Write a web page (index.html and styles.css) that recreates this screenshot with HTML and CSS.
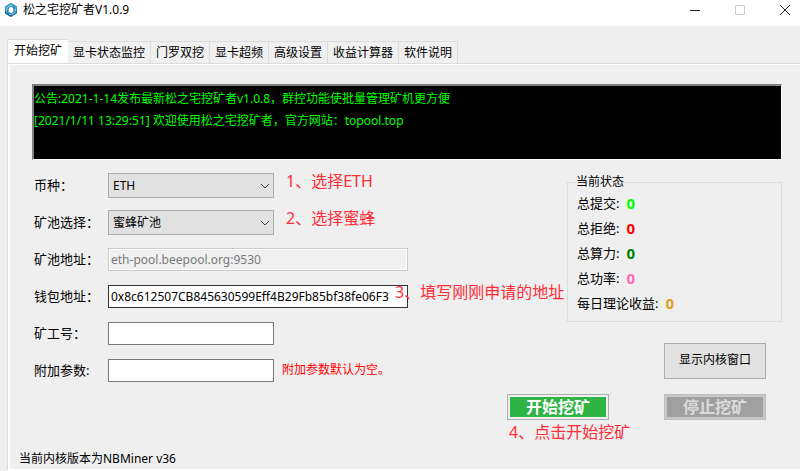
FILE: index.html
```html
<!DOCTYPE html>
<html lang="zh-CN">
<head>
    <meta charset="UTF-8">
    <meta name="viewport" content="width=device-width, initial-scale=1.0">
    <title>松之宅挖矿者V1.0.9</title>
    <link rel="stylesheet" href="styles.css">
</head>
<body>
    <header class="titlebar">
        <svg class="logo" viewBox="0 0 14 16" aria-hidden="true">
            <path d="M7 1 L13 4.5 L13 11.5 L7 15 L1 11.5 L1 4.5 Z" fill="#2a86b8"/>
            <path d="M7 1 L13 4.5 L13 8 C11 4 6.5 3 3.5 5.5 L1 8 L1 4.5 Z" fill="#3aa3cc"/>
            <path d="M1 8 C1.5 12 6 14 10 12 L7 15 L1 11.5 Z" fill="#1a6796"/>
            <path d="M2.6 9.5 C2.2 6 4.5 3.2 8.5 3.6" fill="none" stroke="#b5deee" stroke-width="0.8"/>
            <path d="M11.4 6.5 C11.8 10 9.5 12.8 5.5 12.4" fill="none" stroke="#b5deee" stroke-width="0.8"/>
            <path d="M7 5 C9 5 9.8 6.6 9.4 8.4 C9 10.2 8 11 7 11 C5 11 4.2 9.4 4.6 7.6 C5 5.8 6 5 7 5 Z" fill="#fff"/>
        </svg>
        <h1>松之宅挖矿者V1.0.9</h1>
        <div class="window-buttons">
            <button type="button" aria-label="最小化"><svg viewBox="0 0 12 12"><path d="M1 6.5 H11"/></svg></button>
            <button type="button" aria-label="最大化" disabled><svg viewBox="0 0 12 12"><path d="M1.5 1.5 H10.5 V10.5 H1.5 Z"/></svg></button>
            <button type="button" aria-label="关闭"><svg viewBox="0 0 12 12"><path d="M1 1 L11 11 M11 1 L1 11"/></svg></button>
        </div>
    </header>

    <main class="window">
        <nav class="tabs" role="tablist">
            <button type="button" role="tab" class="tab active" aria-selected="true">开始挖矿</button>
            <button type="button" role="tab" class="tab">显卡状态监控</button>
            <button type="button" role="tab" class="tab">门罗双挖</button>
            <button type="button" role="tab" class="tab">显卡超频</button>
            <button type="button" role="tab" class="tab">高级设置</button>
            <button type="button" role="tab" class="tab">收益计算器</button>
            <button type="button" role="tab" class="tab">软件说明</button>
        </nav>

        <section class="panel">
            <div class="console">
                <p>公告:2021-1-14发布最新松之宅挖矿者v1.0.8，群控功能使批量管理矿机更方便</p>
                <p>[2021/1/11 13:29:51] 欢迎使用松之宅挖矿者，官方网站：topool.top</p>
            </div>

            <div class="columns">
                <form class="settings">
                    <div class="row">
                        <label for="coin">币种：</label>
                        <div class="select">
                            <select id="coin"><option>ETH</option></select>
                            <svg viewBox="0 0 10 6" aria-hidden="true"><path d="M1 1 L5 5 L9 1"/></svg>
                        </div>
                        <span class="note">1、选择ETH</span>
                    </div>
                    <div class="row">
                        <label for="pool">矿池选择：</label>
                        <div class="select">
                            <select id="pool"><option>蜜蜂矿池</option></select>
                            <svg viewBox="0 0 10 6" aria-hidden="true"><path d="M1 1 L5 5 L9 1"/></svg>
                        </div>
                        <span class="note">2、选择蜜蜂</span>
                    </div>
                    <div class="row">
                        <label for="poolUrl">矿池地址：</label>
                        <input type="text" id="poolUrl" class="wide" value="eth-pool.beepool.org:9530" disabled>
                    </div>
                    <div class="row">
                        <label for="wallet">钱包地址：</label>
                        <input type="text" id="wallet" class="wide focused" value="0x8c612507CB845630599Eff4B29Fb85bf38fe06F3">
                        <span class="note note-over">3、填写刚刚申请的地址</span>
                    </div>
                    <div class="row">
                        <label for="worker">矿工号：</label>
                        <input type="text" id="worker">
                    </div>
                    <div class="row">
                        <label for="extra">附加参数:</label>
                        <input type="text" id="extra">
                        <span class="hint">附加参数默认为空。</span>
                    </div>
                </form>

                <div class="side">
                    <fieldset class="status">
                        <legend>当前状态</legend>
                        <dl>
                            <div><dt>总提交:</dt><dd class="submitted">0</dd></div>
                            <div><dt>总拒绝:</dt><dd class="rejected">0</dd></div>
                            <div><dt>总算力:</dt><dd class="hashrate">0</dd></div>
                            <div><dt>总功率:</dt><dd class="power">0</dd></div>
                            <div><dt>每日理论收益:</dt><dd class="income">0</dd></div>
                        </dl>
                    </fieldset>
                    <button type="button" class="show-core">显示内核窗口</button>
                </div>
            </div>

            <div class="actions">
                <button type="button" class="start">开始挖矿</button>
                <button type="button" class="stop" disabled>停止挖矿</button>
                <span class="note">4、点击开始挖矿</span>
            </div>

            <footer class="version">当前内核版本为NBMiner v36</footer>
        </section>
    </main>
</body>
</html>
```

FILE: styles.css
```css
* {
    box-sizing: border-box;
}
body {
    margin: 0;
    min-height: 100vh;
    display: flex;
    flex-direction: column;
    background: #efefef;
    color: #000;
    font-family: "Noto Sans", "Noto Sans CJK SC", sans-serif;
    font-size: 12px;
    line-height: 20px;
}
button, input, select {
    font: inherit;
    color: inherit;
    border-radius: 0;
}

/* title bar */
.titlebar {
    display: flex;
    align-items: center;
    height: 26px;
    padding: 0 9px 6px 4px;
    background: #fff;
}
.logo {
    width: 14px;
    height: 16px;
    margin-right: 5px;
}
h1 {
    margin: 0;
    font-size: 12px;
    font-weight: normal;
}
.window-buttons {
    display: flex;
    gap: 33px;
    margin-left: auto;
}
.window-buttons button {
    display: flex;
    padding: 0;
    border: none;
    background: none;
}
.window-buttons svg {
    width: 12px;
    height: 12px;
    fill: none;
    stroke: #222;
    stroke-width: 1;
}
.window-buttons button:disabled svg {
    stroke: #ccc;
}

/* tabs */
.window {
    flex: 1;
    display: flex;
    flex-direction: column;
    padding: 13px 0 0 7px;
}
.tabs {
    display: flex;
    align-items: flex-end;
}
.tab {
    height: 22px;
    padding: 0 5px;
    border: 1px solid #dcdcdc;
    border-left: none;
    border-bottom: none;
    background: #f0f0f0;
    line-height: 20px;
    white-space: nowrap;
}
.tab.active {
    height: 24px;
    padding: 0 6px 2px;
    border-left: 1px solid #dcdcdc;
    border-right: none;
    background: #fff;
}
.panel {
    flex: 1;
    display: flex;
    flex-direction: column;
    padding: 20px 18px 0 21px;
    border-left: 1px solid #dcdcdc;
    border-top: 1px solid #dcdcdc;
    border-bottom: 2px solid #fff;
    box-shadow: inset 2px 1px #fff;
}

/* log output */
.console {
    height: 76px;
    margin-left: 3px;
    padding: 3px 0;
    border: solid;
    border-width: 2px 1px 1px 2px;
    border-color: #808080 #fff #fff #808080;
    background: #000;
    color: #00ff00;
}
.console p {
    margin: 0 0 2px;
}

/* form */
.columns {
    display: flex;
    gap: 10px;
    padding: 7px 0 0 5px;
}
.settings {
    flex: 1;
}
.row {
    position: relative;
    display: flex;
    align-items: center;
    height: 37px;
}
.row label {
    width: 74px;
    padding-bottom: 2px;
    font-size: 13px;
    white-space: nowrap;
}
.row input {
    width: 166px;
    height: 23px;
    padding: 0 2px;
    border: 1px solid #7a7a7a;
    background: #fff;
}
.row input.wide {
    width: 300px;
}
.row input.focused {
    border-color: #333;
}
.row input:disabled {
    border-color: #ccc;
    background: #f0f0f0;
    box-shadow: inset 0 0 0 1px #fff;
    color: #7a7a7a;
}
.select {
    display: grid;
    align-items: center;
    width: 166px;
}
.select select, .select svg {
    grid-area: 1 / 1;
}
.select select {
    height: 25px;
    padding: 0 4px;
    border: 1px solid #adadad;
    background: #e1e1e1;
    appearance: none;
}
.select svg {
    width: 10px;
    height: 6px;
    margin-right: 4px;
    justify-self: end;
    fill: none;
    stroke: #444;
    pointer-events: none;
}
.note {
    color: #ff2d37;
    font-size: 16px;
    line-height: 24px;
    white-space: nowrap;
}
.row .note {
    margin: 0 0 10px 12px;
}
.row .note-over {
    position: absolute;
    left: 361px;
    margin: 0 0 10px;
}
.hint {
    margin-left: 8px;
    padding-bottom: 2px;
    color: #ff0000;
}

/* status */
.side {
    width: 215px;
    padding-top: 6px;
    display: flex;
    flex-direction: column;
}
.status {
    margin: 0;
    padding: 0 8px 6px;
    border: 1px solid #dcdcdc;
}
.status legend {
    padding: 0;
    line-height: 18px;
}
.status dl {
    margin: -1px 0 0;
    font-size: 13px;
}
.status dl div {
    display: flex;
    align-items: center;
    gap: 7px;
    height: 25px;
    padding-left: 1px;
}
.status dd {
    margin: 0;
    font-size: 15px;
    font-weight: bold;
}
.submitted {
    color: #00ff00;
}
.rejected {
    color: #ff0000;
}
.hashrate {
    color: #008000;
}
.power {
    color: #ff69b4;
}
.income {
    color: #daa520;
}
.show-core {
    align-self: flex-end;
    width: 102px;
    height: 36px;
    margin: 21px 16px 0 0;
    padding: 0 0 2px;
    border: 1px solid #adadad;
    background: #e1e1e1;
}

/* start / stop */
.actions {
    display: grid;
    grid-template-columns: 102px 102px;
    column-gap: 55px;
    justify-content: end;
    margin-right: 16px;
    padding-top: 5px;
}
.actions button {
    height: 26px;
    padding: 0;
    border: 1px solid #adadad;
    font-size: 16px;
    font-weight: bold;
    line-height: 22px;
    color: #fff;
}
.actions .start {
    background: #2fb344;
    box-shadow: inset 0 0 0 2px #f0f0f0;
}
.actions .stop {
    border-color: #bfbfbf;
    background: #a0a0a0;
    box-shadow: inset 0 0 0 2px #c8c8c8;
    color: #dcdcdc;
}
.actions .note {
    grid-column: 1 / -1;
    margin-left: 2px;
}
.version {
    margin-top: auto;
    margin-left: -10px;
}
```
